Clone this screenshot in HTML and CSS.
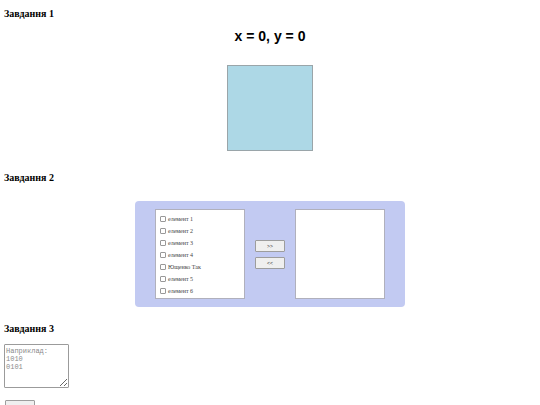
FILE: index.html
```html
<!DOCTYPE html>
<html lang="uk">
<head>
<meta charset="utf-8">
<title>Завдання</title>
<link rel="stylesheet" href="styles.css">
</head>
<body>
<h3 class="task t1">Завдання 1</h3>
<div class="coords">x = 0, y = 0</div>
<div class="square"></div>

<h3 class="task t2">Завдання 2</h3>
<div class="panel">
  <div class="listbox">
    <label class="item"><input type="checkbox" class="chk"> елемент 1</label>
    <label class="item"><input type="checkbox" class="chk"> елемент 2</label>
    <label class="item"><input type="checkbox" class="chk"> елемент 3</label>
    <label class="item"><input type="checkbox" class="chk"> елемент 4</label>
    <label class="item"><input type="checkbox" class="chk"> Ющенко Так</label>
    <label class="item"><input type="checkbox" class="chk"> елемент 5</label>
    <label class="item"><input type="checkbox" class="chk"> елемент 6</label>
  </div>
  <div class="controls">
    <button class="move">&gt;&gt;</button>
    <button class="move">&lt;&lt;</button>
  </div>
  <div class="listbox"></div>
</div>

<h3 class="task t3">Завдання 3</h3>
<div class="areawrap">
  <textarea class="area" placeholder="Наприклад:&#10;1010&#10;0101"></textarea>
</div>
<div class="btnwrap"><button class="check">Go</button></div>
</body>
</html>
```

FILE: styles.css
```css
html, body {
  margin: 0;
  padding: 0;
  background: #ffffff;
}
body {
  padding: 0 4px;
  font-family: "Liberation Serif", "DejaVu Serif", serif;
  color: #000;
  height: 405px;
  overflow: hidden;
}
.task {
  margin: 0;
  font-size: 10px;
  line-height: 12px;
  font-weight: bold;
}
.t1 { margin-top: 8px; }
.t2 { margin-top: 21px; }
.t3 { margin-top: 16px; }

.coords {
  margin-top: 8px;
  text-align: center;
  font-family: "Liberation Sans", Arial, sans-serif;
  font-weight: bold;
  font-size: 14px;
  line-height: 16px;
}
.square {
  margin: 21px auto 0;
  width: 84px;
  height: 84px;
  background: #add8e6;
  border: 1px solid #9aa5a9;
}

.panel {
  margin: 17px auto 0;
  width: 230px;
  padding: 8px 20px;
  background: #c2caf2;
  border-radius: 4px;
  display: flex;
  align-items: center;
  gap: 10px;
}
.listbox {
  background: #fff;
  border: 1px solid #b0b0bc;
  padding: 3px 0 0 4px;
  box-sizing: content-box;
  width: 84px;
  height: 85px;
  display: flex;
  flex-direction: column;
}
.item {
  display: flex;
  align-items: center;
  height: 12px;
  font-size: 6px;
  color: #444;
}
.chk {
  appearance: none;
  -webkit-appearance: none;
  margin: 0 2px 0 0;
  width: 6px;
  height: 6px;
  border: 1px solid #999;
  border-radius: 1px;
  background: #fff;
  box-sizing: border-box;
}
.controls {
  width: 30px;
  display: flex;
  flex-direction: column;
  gap: 5px;
}
.move {
  width: 30px;
  height: 12px;
  margin: 0;
  padding: 0;
  font-family: "Liberation Sans", Arial, sans-serif;
  font-size: 5px;
  color: #333;
  background: #efefef;
  border: 1px solid #9d9d9d;
  border-radius: 1px;
}

.areawrap {
  margin-top: 9px;
  height: 44px;
}
.area {
  display: block;
  margin: 0;
  width: 65px;
  height: 44px;
  box-sizing: border-box;
  padding: 2px 1px;
  border: 1px solid #9b9b9b;
  border-radius: 1px;
  font-family: "Liberation Mono", "DejaVu Sans Mono", monospace;
  font-size: 7px;
  line-height: 8px;
}
.area::placeholder {
  color: #8a8a8a;
}
.btnwrap {
  margin-top: 12px;
  display: flex;
}
.check {
  margin: 0 0 0 1px;
  width: 30px;
  height: 14px;
  padding: 0;
  font-family: "Liberation Sans", Arial, sans-serif;
  font-size: 7px;
  background: #efefef;
  border: 1px solid #9d9d9d;
  border-radius: 1px;
}
```
